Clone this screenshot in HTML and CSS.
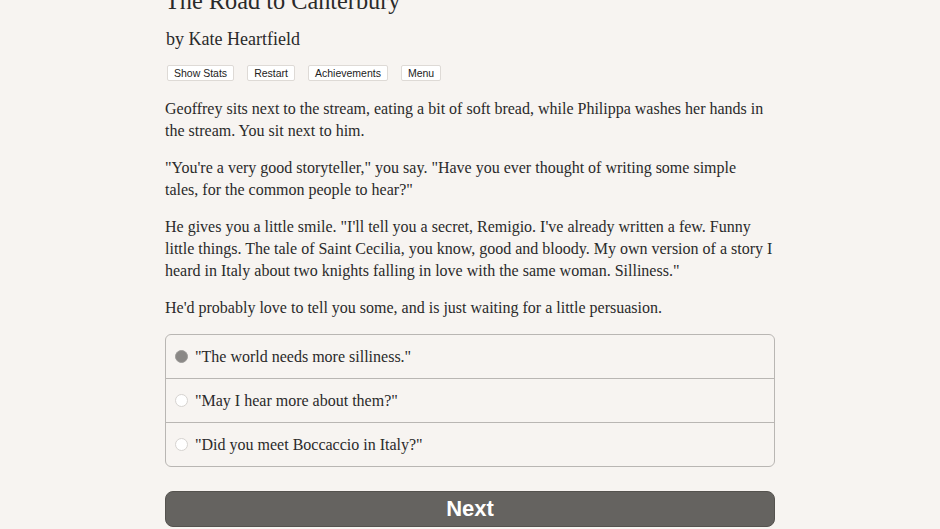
FILE: index.html
```html
<!DOCTYPE html>
<html>
<head>
<meta charset="utf-8">
<link rel="stylesheet" href="styles.css">
</head>
<body>
<div class="page">
  <div class="header">
    <h1 class="title">The Road to Canterbury</h1>
    <h2 class="author">by Kate Heartfield</h2>
    <div class="toolbar">
      <button class="tbtn">Show Stats</button>
      <button class="tbtn">Restart</button>
      <button class="tbtn">Achievements</button>
      <button class="tbtn">Menu</button>
    </div>
  </div>
  <div class="story">
    <p>Geoffrey sits next to the stream, eating a bit of soft bread, while Philippa washes her hands in the stream. You sit next to him.</p>
    <p>"You're a very good storyteller," you say. "Have you ever thought of writing some simple<br>tales, for the common people to hear?"</p>
    <p>He gives you a little smile. "I'll tell you a secret, Remigio. I've already written a few. Funny little things. The tale of Saint Cecilia, you know, good and bloody. My own version of a story I heard in Italy about two knights falling in love with the same woman. Silliness."</p>
    <p>He'd probably love to tell you some, and is just waiting for a little persuasion.</p>
  </div>
  <div class="choices">
    <div class="choice"><span class="radio checked"></span><span>"The world needs more silliness."</span></div>
    <div class="choice"><span class="radio"></span><span>"May I hear more about them?"</span></div>
    <div class="choice"><span class="radio"></span><span>"Did you meet Boccaccio in Italy?"</span></div>
  </div>
  <button class="next">Next</button>
</div>
</body>
</html>
```

FILE: styles.css
```css
html, body {
  margin: 0;
  padding: 0;
  background: #f7f4f1;
}
body {
  font-family: "Liberation Serif", "DejaVu Serif", serif;
  color: #2a2a2a;
  overflow: hidden;
}
.page {
  width: 610px;
  margin: 0 auto;
  margin-top: -14px;
}
.title {
  font-size: 24.3px;
  font-weight: normal;
  margin: 0;
  line-height: 30px;
}
.author {
  font-size: 18px;
  font-weight: normal;
  margin: 11px 0 0 1px;
  line-height: 24px;
}
.toolbar {
  display: flex;
  gap: 13px;
  margin: 14px 0 0 2px;
}
.tbtn {
  font-family: "Liberation Sans", Arial, sans-serif;
  font-size: 10.5px;
  color: #222;
  background: #fff;
  border: 1px solid #dedad6;
  border-radius: 2px;
  padding: 0 6px;
  height: 16px;
  line-height: 14px;
}
.story {
  margin-top: 17px;
  font-size: 16px;
  line-height: 22px;
}
.story p {
  margin: 0 0 15px 0;
}
.story p:last-child {
  margin-bottom: 0;
}
.choices {
  margin-top: 15px;
  border: 1px solid #b9b6b3;
  border-radius: 6px;
  background: #f7f4f1;
}
.choice {
  display: flex;
  align-items: center;
  height: 43px;
  padding-left: 9px;
  font-size: 16px;
  border-top: 1px solid #b9b6b3;
}
.choice:first-child {
  border-top: none;
}
.radio {
  width: 11px;
  height: 11px;
  border-radius: 50%;
  background: #fff;
  border: 1px solid #d6d3d0;
  margin-right: 7px;
  flex: none;
}
.radio.checked {
  background: #8a8886;
  border-color: #9c9a98;
}
.next {
  display: block;
  width: 610px;
  height: 36px;
  margin-top: 24px;
  background: #656360;
  border: 1px solid #55534f;
  border-radius: 8px;
  color: #fff;
  font-family: "Liberation Sans", Arial, sans-serif;
  font-weight: bold;
  font-size: 22px;
}
```
